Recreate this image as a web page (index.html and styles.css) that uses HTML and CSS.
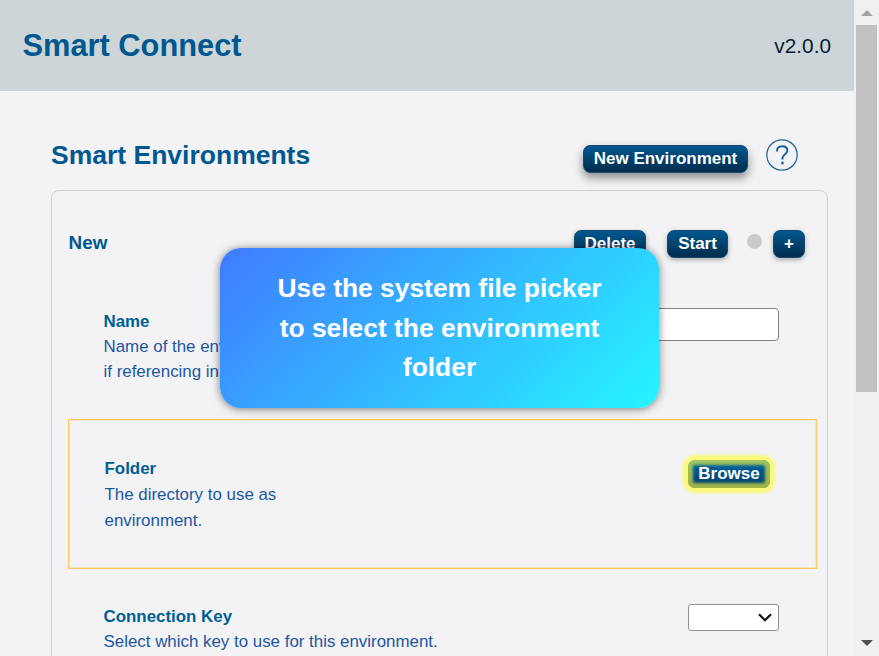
FILE: index.html
```
<!DOCTYPE html>
<html lang="en">
<head>
<meta charset="utf-8">
<title>Smart Connect</title>
<link rel="stylesheet" href="styles.css">
</head>
<body>
<div class="page">
  <header class="topbar">
    <h1 class="brand">Smart Connect</h1>
    <span class="version">v2.0.0</span>
  </header>
  <main class="content">
    <div class="section-head">
      <h2 class="section-title">Smart Environments</h2>
      <button class="btn btn-raised">New Environment</button>
      <svg class="help" viewBox="0 0 32 32" fill="none" stroke="#15639b">
        <circle cx="16" cy="16" r="15.2" stroke-width="1.2"/>
        <path d="M10.9 12.4C10.9 9 13 7.3 16.1 7.3C19.3 7.3 21.4 9.1 21.4 11.8C21.4 15.1 16.4 15.7 16.4 19.6V20.6" stroke-width="1.9"/>
        <path d="M16.4 22.7V25.3" stroke-width="2.4"/>
      </svg>
    </div>
    <section class="card">
      <div class="card-head">
        <h3 class="card-title">New</h3>
        <button class="btn delete">Delete</button>
        <button class="btn start">Start</button>
        <span class="status"></span>
        <button class="btn toggle">+</button>
      </div>
      <div class="setting">
        <div class="label">
          <h4>Name</h4>
          <p>Name of the environment,<br>if referencing in rules.</p>
        </div>
        <input class="text-input" type="text">
      </div>
      <div class="setting highlighted">
        <div class="label">
          <h4>Folder</h4>
          <p>The directory to use as<br>environment.</p>
        </div>
        <button class="btn browse">Browse</button>
      </div>
      <div class="setting key">
        <div class="label">
          <h4>Connection Key</h4>
          <p>Select which key to use for this environment.</p>
        </div>
        <div class="select">
          <svg viewBox="0 0 14 9" fill="none" stroke="#101010" stroke-width="2.2"><path d="M1 1.2L7 7.2L13 1.2"/></svg>
        </div>
      </div>
    </section>
  </main>
</div>
<div class="scrollbar">
  <svg class="arrow" viewBox="0 0 12 6"><path d="M0 6L6 0L12 6Z" fill="#a3a3a3"/></svg>
  <div class="thumb"></div>
  <svg class="arrow" viewBox="0 0 12 6"><path d="M0 0L6 6L12 0Z" fill="#505050"/></svg>
</div>
<div class="tooltip">Use the system file picker<br>to select the environment<br>folder</div>
</body>
</html>
```

FILE: styles.css
```
* { box-sizing: border-box; margin: 0; }
body {
  display: flex;
  height: 656px;
  overflow: hidden;
  background: #f3f3f6;
  font: 16.9px/25px "Liberation Sans", Arial, sans-serif;
  color: #1d579f;
}
.page { width: 854px; height: 656px; overflow: hidden; }
.topbar {
  display: flex;
  align-items: center;
  justify-content: space-between;
  height: 91px;
  padding: 0 23px 0 22.5px;
  background: #cdd5d8;
}
.brand { font-size: 30.8px; line-height: 36px; color: #00588f; }
.version { font-size: 20.8px; line-height: 24px; color: #061c36; }
.content { padding: 48px 26px 0 51px; }
.section-head { display: flex; height: 51px; align-items: flex-start; }
.section-title { flex: 1; font-size: 26.5px; line-height: 32px; color: #00588f; }
.btn {
  height: 28px;
  padding: 0;
  border: 1px solid #164b70;
  border-radius: 7px;
  background: linear-gradient(#00588f, #002c4c);
  box-shadow: 0 2px 5px rgba(0, 0, 0, .3);
  font: bold 17px/26px "Liberation Sans", Arial, sans-serif;
  color: #fff;
}
.btn-raised {
  width: 165px;
  margin: 6px 18px 0 0;
  box-shadow: 0 5px 10px rgba(0, 0, 0, .42);
}
.help { width: 32px; height: 32px; margin-right: 30px; }
.card {
  height: 520px;
  padding: 0 10px 0 16px;
  border: 1px solid #d0d2d5;
  border-radius: 8px;
}
.card-head { display: flex; height: 102px; padding: 39px 12px 0 .5px; }
.card-title { flex: 1; font-size: 18.9px; line-height: 26px; color: #00588f; }
.delete { width: 72px; }
.start { width: 61px; margin-left: 21px; }
.status { width: 15px; height: 15px; margin: 4px 11px 0 19px; border-radius: 50%; background: #cbcbcb; }
.toggle { width: 32px; }
.setting { display: flex; justify-content: space-between; height: 126px; padding: 15px 38px 0 35.5px; }
.label { padding-top: 1px; }
.label h4 { font-size: 16.9px; line-height: 25px; color: #005f93; }
.text-input {
  width: 300px;
  height: 33px;
  border: 1px solid #858585;
  border-radius: 4px;
  background: #fff;
}
.setting.highlighted {
  height: 150px;
  border: 1px solid #fac761;
  padding: 35px 46px 0 35.5px;
  outline: 1px solid rgba(250, 199, 97, .3);
  outline-offset: -2px;
}
.highlighted .label h4, .highlighted .label p { line-height: 26px; }
.browse {
  width: 82px;
  margin-top: 5px;
  border: 0;
  background: linear-gradient(#0068a8, #003c66);
  box-shadow: 0 0 3px 5px #faf97a, inset 0 0 3px 5px rgba(250, 249, 56, .64);
}
.setting.key { padding-top: 35px; }
.key .label { padding-top: 0; }
.select {
  display: flex;
  align-items: center;
  justify-content: flex-end;
  width: 91px;
  height: 27px;
  padding-right: 6px;
  border: 1px solid #929292;
  border-radius: 3px;
  background: #fff;
}
.select svg { width: 14px; height: 9px; }
.scrollbar {
  display: flex;
  flex-direction: column;
  align-items: center;
  width: 25px;
  height: 656px;
  padding: 10px 0;
  background: #f0f0f0;
}
.arrow { width: 12px; height: 6px; }
.thumb { width: 21px; height: 367px; margin: 9px 0 auto; background: #c1c1c1; }
.tooltip {
  position: absolute;
  left: 220px;
  top: 248px;
  width: 439px;
  height: 160px;
  padding-top: 21px;
  border-radius: 21px;
  background: linear-gradient(135deg, #407bff, #26f5ff);
  box-shadow: 0 1px 9px rgba(0, 0, 0, .5);
  font-size: 26.4px;
  font-weight: bold;
  line-height: 39.6px;
  text-align: center;
  color: #fff;
}
```
